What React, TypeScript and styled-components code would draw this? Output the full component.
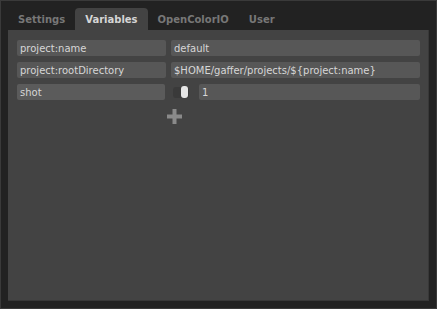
import styled, { createGlobalStyle } from 'styled-components'

const GlobalStyle = createGlobalStyle`
    html, body {
        margin: 0;
        padding: 0;
        background: #222222;
    }
    body {
        font-family: 'DejaVu Sans', 'Liberation Sans', sans-serif;
    }
`

const tabs = ['Settings', 'Variables', 'OpenColorIO', 'User']

const variables = [
    { name: 'project:name', value: 'default' },
    { name: 'project:rootDirectory', value: '$HOME/gaffer/projects/${project:name}' },
]

export default function App() {
    return (
        <Frame>
            <GlobalStyle />
            <TabBar>
                {tabs.map((tab) => (
                    <Tab key={tab} $active={tab === 'Variables'}>
                        {tab}
                    </Tab>
                ))}
            </TabBar>

            <Panel>
                {variables.map((v) => (
                    <Row key={v.name}>
                        <NameField>{v.name}</NameField>
                        <ValueField>{v.value}</ValueField>
                    </Row>
                ))}

                <Row>
                    <NameField $focused>shot</NameField>
                    <Toggle>
                        <Knob />
                    </Toggle>
                    <ValueField>1</ValueField>
                </Row>

                <AddRow>
                    <svg width="15" height="15" viewBox="0 0 15 15">
                        <rect x="5.5" y="0" width="4" height="15" fill="#8a8a8a" />
                        <rect x="0" y="5.5" width="15" height="4" fill="#8a8a8a" />
                    </svg>
                </AddRow>
            </Panel>
        </Frame>
    )
}

const Frame = styled.div`
    width: 437px;
    height: 309px;
    box-sizing: border-box;
    border: 1px solid #3a3a3a;
    display: flex;
    flex-direction: column;
    padding: 7px;
`

const TabBar = styled.div`
    display: flex;
    height: 22px;
`

const Tab = styled.div<{ $active?: boolean }>`
    height: 22px;
    padding: 0 10px;
    display: flex;
    align-items: center;
    font-size: 10px;
    font-weight: bold;
    border-radius: 4px 4px 0 0;
    color: ${({ $active }) => ($active ? '#d6d6d6' : '#777777')};
    background: ${({ $active }) => ($active ? '#434343' : 'transparent')};
`

const Panel = styled.div`
    flex: 1;
    background: #434343;
    border-right: 1px solid #383838;
    border-bottom: 1px solid #383838;
    padding: 10px 8px 0 9px;
    display: flex;
    flex-direction: column;
    gap: 6px;
`

const Row = styled.div`
    display: flex;
    align-items: center;
    height: 16px;
    gap: 5px;
`

const Field = styled.div`
    height: 16px;
    box-sizing: border-box;
    border-radius: 2px;
    padding: 0 3px;
    display: flex;
    align-items: center;
    font-size: 10px;
    color: #d6d6d6;
    white-space: nowrap;
    overflow: hidden;
`

const NameField = styled(Field)<{ $focused?: boolean }>`
    width: ${({ $focused }) => ($focused ? '148px' : '149px')};
    background: ${({ $focused }) => ($focused ? '#5b5b5b' : '#575757')};
`

const ValueField = styled(Field)`
    flex: 1;
    background: #575757;
`

const Toggle = styled.div`
    width: 16px;
    height: 11px;
    margin: 0 5px 0 3px;
    border-radius: 3px;
    background: #3a3a3a;
    display: flex;
    justify-content: flex-end;
    align-items: center;
`

const Knob = styled.div`
    width: 7px;
    height: 12px;
    border-radius: 3px;
    background: #e6e6e6;
    margin-right: 1px;
`

const AddRow = styled.div`
    display: flex;
    padding-left: 150px;
    margin-top: 3px;
`
